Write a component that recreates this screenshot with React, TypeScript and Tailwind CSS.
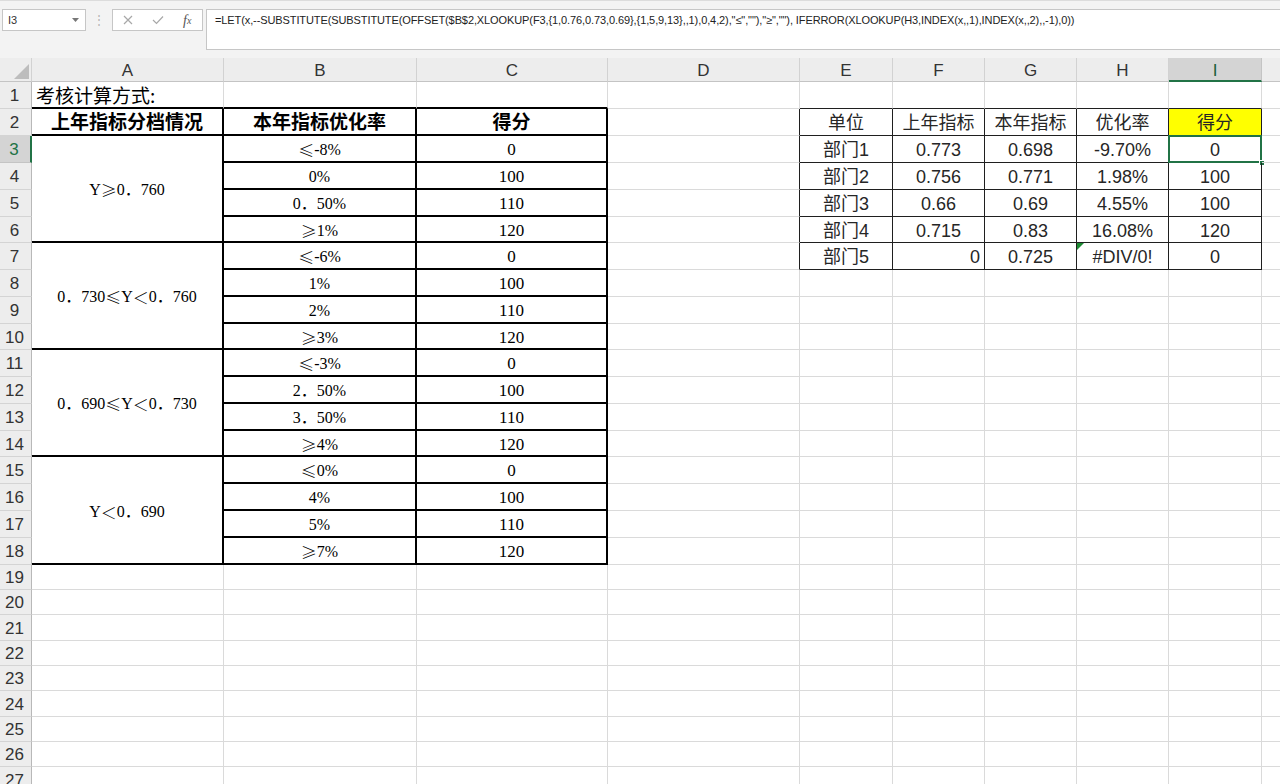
import React from 'react'

// row heights for rows 1..27
const H = [
  'h-[27px]', 'h-[27px]', 'h-[27px]', 'h-[27px]', 'h-[27px]', 'h-[26px]',
  'h-[27px]', 'h-[27px]', 'h-[27px]', 'h-[26px]', 'h-[27px]', 'h-[27px]',
  'h-[27px]', 'h-[26px]', 'h-[27px]', 'h-[27px]', 'h-[27px]', 'h-[27px]',
  'h-[25px]', 'h-[25px]', 'h-[26px]', 'h-[25px]', 'h-[25px]', 'h-[26px]',
  'h-[25px]', 'h-[25px]', 'h-[26px]',
]

const GRID = 'border-r border-b border-r-[#dadada] border-b-[#dadada]'
const TOP_THICK = 'border-r border-b-2 border-r-[#dadada] border-b-black'
const THICK = 'border-r-2 border-b-2 border-r-black border-b-black'
const TOP_THIN = 'border-r border-b border-r-[#dadada] border-b-[#1f1f1f]'
const THIN = 'border-r border-b border-r-[#1f1f1f] border-b-[#1f1f1f]'
const LEFT_THIN = 'border-r border-b border-r-[#1f1f1f] border-b-[#dadada]'

const SERIF = "font-['Liberation_Serif','Noto_Sans_CJK_SC',serif] text-black pt-[3px]"
const CJK = "font-['Noto_Sans_CJK_SC',sans-serif] text-black"
const SANS = "font-['Liberation_Sans','Noto_Sans_CJK_SC',sans-serif] text-[18px] text-[#262626] pt-[3px]"
const UI = "font-['Liberation_Sans',sans-serif]"

// comparison signs are drawn full width, as the sheet's CJK font does
function Rel({ s }: { s: string }) {
  const parts = s.split(/([≤≥＜])/)
  return (
    <>
      {parts.map((p, i) =>
        /[≤≥＜]/.test(p) ? (
          <span key={i} className="font-['Noto_Sans_CJK_SC',sans-serif] font-light">
            {p}
          </span>
        ) : (
          p
        ),
      )}
    </>
  )
}

function Cell({
  h,
  b = GRID,
  className = '',
  children,
}: {
  h: string
  b?: string
  className?: string
  children?: React.ReactNode
}) {
  return (
    <div className={`relative flex shrink-0 items-center whitespace-nowrap ${h} ${b} ${className}`}>
      {children}
    </div>
  )
}

function Toolbar() {
  return (
    <div className={`flex h-[58px] items-start border-t border-t-[#dcdcdc] bg-[#f3f3f3] pt-[8px] ${UI}`}>
      <div className="ml-[2px] flex h-[22px] w-[84px] items-center justify-between border border-[#c6c6c6] bg-white pl-[5px] pr-[6px]">
        <span className="text-[11px] text-[#333]">I3</span>
        <svg width="7" height="4" viewBox="0 0 7 4">
          <path d="M0 0 L7 0 L3.5 4 Z" fill="#777" />
        </svg>
      </div>
      <div className="flex h-[22px] w-[26px] items-center justify-center text-[12px] text-[#b5b5b5]">⋮</div>
      <div className="flex h-[22px] w-[91px] items-center border border-[#c6c6c6] bg-white">
        <div className="flex w-[30px] justify-center">
          <svg width="10" height="10" viewBox="0 0 10 10">
            <path d="M1 1 L9 9 M9 1 L1 9" stroke="#a8a8a8" strokeWidth="1.2" />
          </svg>
        </div>
        <div className="flex w-[30px] justify-center">
          <svg width="12" height="10" viewBox="0 0 12 10">
            <path d="M1 5 L4.5 8.5 L11 1.5" stroke="#a8a8a8" strokeWidth="1.2" fill="none" />
          </svg>
        </div>
        <div className="flex w-[30px] justify-center font-['Liberation_Serif',serif] text-[14px] italic text-[#555]">
          f<span className="mt-[3px] text-[10px]">x</span>
        </div>
      </div>
      <div className="ml-[3px] h-[41px] flex-1 border border-r-0 border-[#c6c6c6] bg-white pl-[8px] pt-[3px] text-[11px] leading-[14px] tracking-[-0.1px] text-[#222]">
        =LET(x,--SUBSTITUTE(SUBSTITUTE(OFFSET($B$2,XLOOKUP(F3,{'{'}1,0.76,0.73,0.69{'}'},{'{'}1,5,9,13{'}'},,1),0,4,2),"≤",""),"≥",""), IFERROR(XLOOKUP(H3,INDEX(x,,1),INDEX(x,,2),,-1),0))
      </div>
    </div>
  )
}

const HEAD_CELL = 'flex shrink-0 items-center justify-center pt-[3px] border-r border-b border-r-[#d2d2d2] border-b-[#c4c4c4] bg-[#ededed]'

function HeaderRow() {
  const cols: [string, string][] = [
    ['A', 'w-[192px]'],
    ['B', 'w-[193px]'],
    ['C', 'w-[191px]'],
    ['D', 'w-[192px]'],
    ['E', 'w-[93px]'],
    ['F', 'w-[92px]'],
    ['G', 'w-[92px]'],
    ['H', 'w-[92px]'],
  ]
  return (
    <div className={`flex h-[24px] bg-[#f3f3f3] text-[17px] text-[#333] ${UI}`}>
      <div className={`relative ${HEAD_CELL} w-[32px] border-r-[#bdbdbd]`}>
        <svg className="absolute bottom-[2px] right-[2px]" width="15" height="15" viewBox="0 0 15 15">
          <path d="M15 0 L15 15 L0 15 Z" fill="#bdbdbd" />
        </svg>
      </div>
      {cols.map(([l, w]) => (
        <div key={l} className={`${HEAD_CELL} ${w}`}>
          {l}
        </div>
      ))}
      <div className="flex w-[93px] shrink-0 items-center justify-center border-r border-b-2 border-r-[#c4c4c4] border-b-[#217346] bg-[#d4d4d4] pt-[3px] text-[#1d5c38]">
        I
      </div>
      <div className={`${HEAD_CELL} w-[40px]`} />
    </div>
  )
}

function RowHeads() {
  return (
    <div className={`flex w-[32px] shrink-0 flex-col text-[17px] ${UI}`}>
      {H.map((h, i) =>
        i === 2 ? (
          <div
            key={i}
            className={`flex shrink-0 items-center justify-center pr-[2px] pt-[2px] ${h} border-b border-r-2 border-b-[#c4c4c4] border-r-[#217346] bg-[#d4d4d4] text-[#217346]`}
          >
            {i + 1}
          </div>
        ) : (
          <div
            key={i}
            className={`flex shrink-0 items-center justify-center pr-[2px] pt-[2px] ${h} border-b border-r border-b-[#d4d4d4] border-r-[#b8b8b8] bg-[#ededed] text-[#333]`}
          >
            {i + 1}
          </div>
        ),
      )}
    </div>
  )
}

function ColA() {
  const blocks = ['Y≥0．760', '0．730≤Y＜0．760', '0．690≤Y＜0．730', 'Y＜0．690']
  const bh = ['h-[107px]', 'h-[107px]', 'h-[107px]', 'h-[108px]']
  return (
    <div className="flex w-[192px] shrink-0 flex-col">
      <Cell h={H[0]} b={TOP_THICK} className="items-end">
        <span className={`pl-[4px] text-[19px] leading-[25px] ${CJK}`}>考核计算方式:</span>
      </Cell>
      <Cell h={H[1]} b={THICK} className="justify-center">
        <span className={`text-[19px] font-bold ${CJK}`}>上年指标分档情况</span>
      </Cell>
      {blocks.map((t, i) => (
        <Cell key={t} h={bh[i]} b={THICK} className={`justify-center text-[16px] ${SERIF}`}>
          <Rel s={t} />
        </Cell>
      ))}
      {H.slice(18).map((h, i) => (
        <Cell key={i} h={h} />
      ))}
    </div>
  )
}

const RATES = ['≤-8%', '0%', '0．50%', '≥1%', '≤-6%', '1%', '2%', '≥3%', '≤-3%', '2．50%', '3．50%', '≥4%', '≤0%', '4%', '5%', '≥7%']
const SCORES = ['0', '100', '110', '120']

function TableCol({ w, title, values, size }: { w: string; title: string; values: string[]; size: string }) {
  return (
    <div className={`flex shrink-0 flex-col ${w}`}>
      <Cell h={H[0]} b={TOP_THICK} />
      <Cell h={H[1]} b={THICK} className="justify-center">
        <span className={`text-[19px] font-bold ${CJK}`}>{title}</span>
      </Cell>
      {values.map((v, i) => (
        <Cell key={i} h={H[i + 2]} b={THICK} className={`justify-center ${size} ${SERIF}`}>
          <Rel s={v} />
        </Cell>
      ))}
      {H.slice(18).map((h, i) => (
        <Cell key={i} h={h} />
      ))}
    </div>
  )
}

function ColD() {
  return (
    <div className="flex w-[192px] shrink-0 flex-col">
      {H.map((h, i) => (
        <Cell key={i} h={h} b={i >= 1 && i <= 6 ? LEFT_THIN : GRID} />
      ))}
    </div>
  )
}

type V = { t: string; align?: 'right' }

function DataCol({
  w,
  values,
  yellowHead,
  selectRow,
  flagRow,
}: {
  w: string
  values: V[]
  yellowHead?: boolean
  selectRow?: number
  flagRow?: number
}) {
  return (
    <div className={`flex shrink-0 flex-col ${w}`}>
      <Cell h={H[0]} b={TOP_THIN} />
      {values.map((v, i) => (
        <Cell
          key={i}
          h={H[i + 1]}
          b={THIN}
          className={`${SANS} ${v.align === 'right' ? 'justify-end pr-[4px]' : 'justify-center'} ${
            i === 0 && yellowHead ? 'bg-[#ffff00]' : ''
          }`}
        >
          {v.t}
          {selectRow === i && (
            <>
              <div className="pointer-events-none absolute -left-px -top-px bottom-[-1px] right-[-1px] border-2 border-[#217346]" />
              <div className="absolute bottom-[-4px] right-[-4px] h-[6px] w-[6px] border border-white bg-[#217346]" />
            </>
          )}
          {flagRow === i && (
            <div className="absolute left-0 top-0 h-0 w-0 border-r-[7px] border-t-[7px] border-r-transparent border-t-[#1c8a32]" />
          )}
        </Cell>
      ))}
      {H.slice(7).map((h, i) => (
        <Cell key={i} h={h} />
      ))}
    </div>
  )
}

const t = (s: string): V => ({ t: s })

export default function App() {
  return (
    <div className="h-[784px] w-[1280px] overflow-hidden bg-white">
      <Toolbar />
      <HeaderRow />
      <div className="flex">
        <RowHeads />
        <ColA />
        <TableCol w="w-[193px]" size="text-[16px]" title="本年指标优化率" values={RATES} />
        <TableCol
          w="w-[191px]"
          size="text-[17px]"
          title="得分"
          values={[...SCORES, ...SCORES, ...SCORES, ...SCORES]}
        />
        <ColD />
        <DataCol w="w-[93px]" values={['单位', '部门1', '部门2', '部门3', '部门4', '部门5'].map(t)} />
        <DataCol
          w="w-[92px]"
          values={[t('上年指标'), t('0.773'), t('0.756'), t('0.66'), t('0.715'), { t: '0', align: 'right' }]}
        />
        <DataCol w="w-[92px]" values={['本年指标', '0.698', '0.771', '0.69', '0.83', '0.725'].map(t)} />
        <DataCol w="w-[92px]" values={['优化率', '-9.70%', '1.98%', '4.55%', '16.08%', '#DIV/0!'].map(t)} flagRow={5} />
        <DataCol w="w-[93px]" values={['得分', '0', '100', '100', '120', '0'].map(t)} yellowHead selectRow={1} />
        <div className="flex w-[40px] shrink-0 flex-col">
          {H.map((h, i) => (
            <Cell key={i} h={h} />
          ))}
        </div>
      </div>
    </div>
  )
}
